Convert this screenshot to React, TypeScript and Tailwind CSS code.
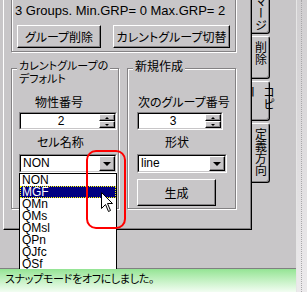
import type { ReactNode } from "react";

type BoxProps = { className?: string; children?: ReactNode };

const Raised = ({ className = "", children }: BoxProps) => (
  <div
    className={`flex items-center justify-center border border-t-white border-l-white border-r-black border-b-black bg-[#c8c6c8] shadow-[inset_-1px_-1px_0_#848284] ${className}`}
  >
    {children}
  </div>
);

const Sunken = ({ className = "", children }: BoxProps) => (
  <div
    className={`flex border border-t-[#848284] border-l-[#848284] border-r-white border-b-white ${className}`}
  >
    <div className="flex flex-1 border border-t-black border-l-black border-r-[#c8c6c8] border-b-[#c8c6c8] bg-white">
      {children}
    </div>
  </div>
);

const SpinBox = ({ value, className }: { value: string; className: string }) => (
  <Sunken className={className}>
    <span className="flex-1 pl-[2px] text-center font-[Liberation_Sans,Arial,sans-serif] text-[12px] leading-[14px]">
      {value}
    </span>
    <div className="flex w-[16px] flex-col">
      <Raised className="h-[7px]">
        <span className="border-x-2 border-b-2 border-x-transparent border-b-black" />
      </Raised>
      <Raised className="h-[7px]">
        <span className="border-x-2 border-t-2 border-x-transparent border-t-black" />
      </Raised>
    </div>
  </Sunken>
);

const Combo = ({ value, className }: { value: string; className: string }) => (
  <Sunken className={className}>
    <span className="flex-1 pl-[2px] font-[Liberation_Sans,Arial,sans-serif] text-[12px] leading-[15px]">
      {value}
    </span>
    <Raised className="w-[16px]">
      <span className="border-x-4 border-t-4 border-x-transparent border-t-black" />
    </Raised>
  </Sunken>
);

const GroupBox = ({
  title,
  titleClass = "",
  className = "",
  children,
}: BoxProps & { title?: ReactNode; titleClass?: string }) => (
  <div
    className={`relative flex flex-col border border-[#848284] shadow-[inset_1px_1px_0_#fff,1px_1px_0_#fff] ${className}`}
  >
    {title && (
      <div
        className={`absolute top-[-10px] left-[5px] whitespace-nowrap bg-[#c8c6c8] px-[2px] ${titleClass}`}
      >
        {title}
      </div>
    )}
    {children}
  </div>
);

const Tab = ({ label, className }: { label: string; className: string }) => (
  <div
    className={`flex w-[18px] justify-center rounded-r-[3px] border-t border-r border-b border-t-white border-r-black border-b-black shadow-[inset_-1px_-1px_0_#848284] pt-[4px] ${className}`}
  >
    <span className="leading-[16px] [font-feature-settings:normal] [text-orientation:upright] [writing-mode:vertical-rl]">
      {label}
    </span>
  </div>
);

const listItems = ["NON", "MGF", "QMn", "QMs", "QMsl", "QPn", "QJfc", "QSf"];

export default function App() {
  return (
    <div className="relative flex h-[292px] w-[307px] overflow-hidden bg-[#c8c6c8] font-[Noto_Sans_CJK_JP,sans-serif] text-[12px] leading-[13px] text-black [font-feature-settings:'palt']">
      <div className="flex w-[296px] flex-col">
        <div className="flex h-[268px]">
          <div className="w-[3px]" />

          {/* tab page */}
          <div className="flex h-[230px] w-[249px] flex-col border-l border-r border-b border-l-white border-r-black border-b-black pl-[7px] shadow-[inset_-1px_-1px_0_#848284]">
            <GroupBox className="-mt-[6px] h-[58px] w-[225px]">
              <div className="mt-[9px] pl-[3px] font-[Liberation_Sans,Arial,sans-serif] text-[13px] leading-[14px]">
                3 Groups. Min.GRP= 0 Max.GRP= 2
              </div>
              <div className="mt-[7px] flex gap-[12px] pl-[5px]">
                <Raised className="h-[23px] w-[84px]">グループ削除</Raised>
                <Raised className="h-[23px] w-[117px]">カレントグループ切替</Raised>
              </div>
            </GroupBox>

            <div className="mt-[16px] flex gap-[8px]">
              <GroupBox
                className="h-[141px] w-[108px]"
                titleClass="text-[11px] leading-[13px]"
                title={
                  <>
                    カレントグループの
                    <br />
                    デフォルト
                  </>
                }
              >
                <div className="mt-[26px] ml-[23px]">物性番号</div>
                <SpinBox value="2" className="mt-[4px] ml-[7px] h-[18px] w-[98px]" />
                <div className="mt-[5px] ml-[25px]">セル名称</div>
                <Combo value="NON" className="mt-[6px] ml-[7px] h-[19px] w-[98px]" />
              </GroupBox>

              <GroupBox className="h-[141px] w-[109px]" title="新規作成">
                <div className="mt-[26px] ml-[10px]">次のグループ番号</div>
                <SpinBox value="3" className="mt-[4px] ml-[9px] h-[18px] w-[86px]" />
                <div className="mt-[5px] ml-[37px]">形状</div>
                <Combo value="line" className="mt-[6px] ml-[9px] h-[19px] w-[90px]" />
                <Raised className="mt-[6px] ml-[9px] h-[27px] w-[79px]">生成</Raised>
              </GroupBox>
            </div>
          </div>

          {/* vertical tabs */}
          <div className="flex flex-col gap-[2px]">
            <Tab label="マージ" className="-mt-[10px] h-[44px]" />
            <Tab label="削除" className="h-[43px]" />
            <Tab label="コピー" className="h-[40px]" />
            <Tab label="定義方向" className="h-[60px]" />
          </div>
        </div>

        {/* status bar */}
        <div className="h-[24px] border-t border-t-[#808080] bg-gradient-to-b from-[#94e494] to-[#f2fdf2] pt-[3px] pl-[5px] text-[11px] tracking-[-0.3px]">
          スナップモードをオフにしました。
        </div>
      </div>

      {/* window edge */}
      <div className="flex w-[11px] border-l border-l-[#e6e6e6] bg-gradient-to-b from-[#d0ced0] to-[#eceaec]">
        <div className="ml-[4px] w-px border-l border-dotted border-l-[#a8a6a8]" />
      </div>

      {/* open dropdown list */}
      <div className="absolute top-[173px] left-[19px] h-[96px] w-[98px] overflow-hidden border-x border-t border-black bg-white font-[Liberation_Sans,Arial,sans-serif] text-[12px]">
        {listItems.map((item) => (
          <div
            key={item}
            className={
              item === "MGF"
                ? "h-[12px] bg-[#000080] pt-[1px] pl-[2px] leading-[11px] text-white outline-1 -outline-offset-1 outline-dotted outline-[#ffff00]"
                : "h-[12px] pt-[1px] pl-[2px] leading-[11px]"
            }
          >
            {item}
          </div>
        ))}
      </div>

      {/* annotation */}
      <div className="absolute top-[150px] left-[86px] h-[79px] w-[40px] rounded-[10px] border-2 border-[#ff0000]" />

      {/* mouse cursor */}
      <svg className="absolute top-[192px] left-[101px]" width="13" height="21" viewBox="0 0 13 21">
        <polygon
          points="0.5,0.5 0.5,16.5 4.5,12.5 7.5,19.5 9.5,18.5 6.5,11.5 11.5,11.5"
          fill="#fff"
          stroke="#000"
          strokeWidth="1"
        />
      </svg>
    </div>
  );
}
